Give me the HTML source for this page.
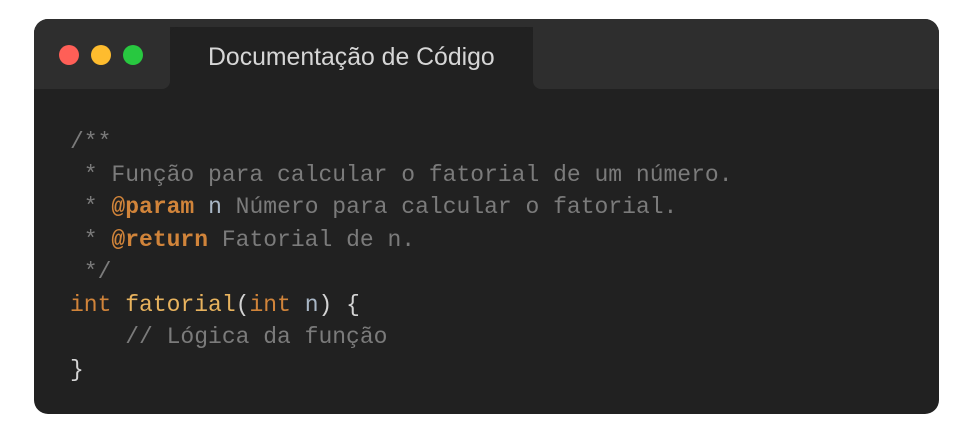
<!DOCTYPE html>
<html><head><meta charset="utf-8"><style>
html,body{margin:0;padding:0;background:#fff;width:963px;height:434px;overflow:hidden}
.card{position:absolute;left:34px;top:19px;width:905px;height:395px;background:#212121;border-radius:14px;overflow:hidden}
.segL{position:absolute;left:0;top:0;width:136px;height:70px;background:#2e2e2e;border-bottom-right-radius:8px}
.segR{position:absolute;left:499px;top:0;width:406px;height:70px;background:#2e2e2e;border-bottom-left-radius:8px}
.segT{position:absolute;left:136px;top:0;width:363px;height:8px;background:#2e2e2e}
.tab{position:absolute;left:136px;top:8px;width:363px;height:70px;background:#212121;border-radius:8px 8px 0 0}
.dot{position:absolute;top:26px;width:20px;height:20px;border-radius:50%}
.title{position:absolute;left:174px;top:24px;font:24.8px "Liberation Sans",sans-serif;color:#d6d6d6;line-height:30px;white-space:nowrap}
pre{position:absolute;left:36px;top:107px;margin:0;font:23px/32.5px "Liberation Mono",monospace;color:#7b7b7b}
.k{color:#d1843a;font-weight:bold}.f{color:#e8b35e}.n{color:#a9b7c6}.w{color:#d4d4d4}
</style></head><body>
<div class="card">
<div class="segT"></div><div class="segL"></div><div class="segR"></div><div class="tab"></div>
<div class="dot" style="left:25px;background:#ff5f57"></div>
<div class="dot" style="left:57px;background:#febc2e"></div>
<div class="dot" style="left:89px;background:#28c840"></div>
<div class="title">Documentação de Código</div>
<pre>/**
 * Função para calcular o fatorial de um número.
 * <span class="k">@param</span> <span class="n">n</span> Número para calcular o fatorial.
 * <span class="k">@return</span> Fatorial de n.
 */
<span class="k" style="font-weight:normal;color:#d1843a">int</span> <span class="f">fatorial</span><span class="w">(</span><span class="k" style="font-weight:normal">int</span> <span class="n">n</span><span class="w">) {</span>
    // Lógica da função
<span class="w">}</span></pre>
</div>
</body></html>
